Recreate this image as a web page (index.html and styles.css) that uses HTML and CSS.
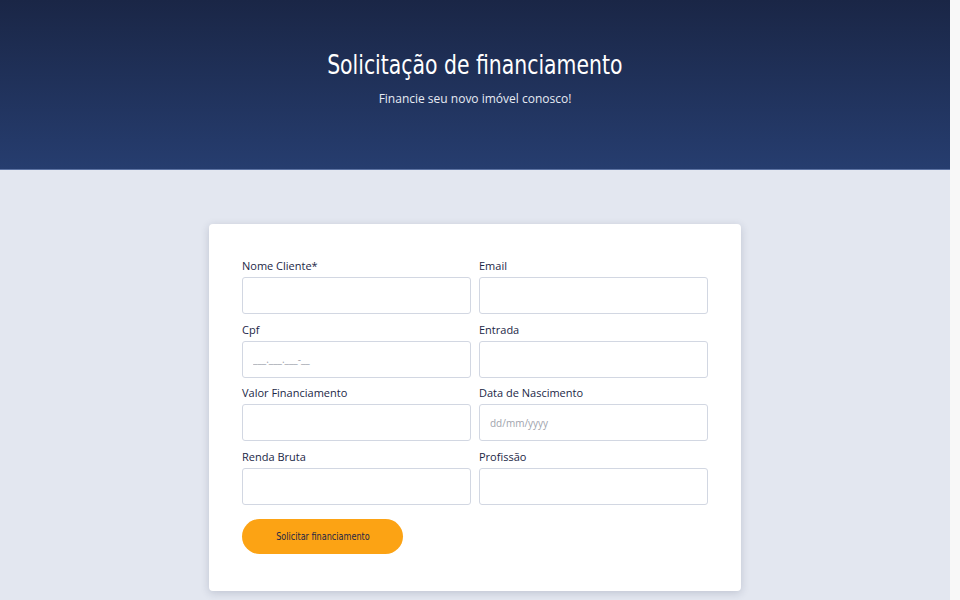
FILE: index.html
```html
<!DOCTYPE html>
<html lang="pt-BR">
<head>
	<title>Solicitação de financiamento</title>
	<meta charset="UTF-8">
	<link rel="stylesheet" href="styles.css">
</head>
<body>
	<header class="hero">
		<h1><span class="narrow">Solicitação de financiamento</span></h1>
		<p>Financie seu novo imóvel conosco!</p>
	</header>

	<section class="main">
		<form class="card">
			<div class="fields">
				<div class="field">
					<label>Nome Cliente*</label>
					<input type="text">
				</div>
				<div class="field">
					<label>Email</label>
					<input type="text">
				</div>
				<div class="field">
					<label>Cpf</label>
					<input type="text" placeholder="___.___.___-__">
				</div>
				<div class="field">
					<label>Entrada</label>
					<input type="text">
				</div>
				<div class="field">
					<label>Valor Financiamento</label>
					<input type="text">
				</div>
				<div class="field">
					<label>Data de Nascimento</label>
					<input type="text" placeholder="dd/mm/yyyy">
				</div>
				<div class="field">
					<label>Renda Bruta</label>
					<input type="text">
				</div>
				<div class="field">
					<label>Profissão</label>
					<input type="text">
				</div>
			</div>
			<button type="button" class="submit"><span class="narrow">Solicitar financiamento</span></button>
		</form>
	</section>
</body>
</html>
```

FILE: styles.css
```css
html {
	background: #f8f8f8;
}

body {
	margin: 0 10px 0 0;
	padding: 0;
	background: #e3e7f0;
	font-family: "Open Sans", "Noto Sans", sans-serif;
	color: #1b2746;
}

/* condensed display text */
.narrow {
	display: inline-block;
	font-family: "DejaVu Sans Condensed", sans-serif;
	transform: scaleX(0.84);
}

/* header */
.hero {
	height: 169px;
	background: linear-gradient(to bottom, #1a2646, #263d6f);
	border-bottom: 1px solid #5d73a3;
	text-align: center;
	color: #fff;
	overflow: hidden;
}
.hero h1 {
	margin: 47px 0 0;
	font-weight: normal;
	font-size: 27px;
	line-height: 34px;
}
.hero p {
	margin: 8px 0 0;
	font-size: 12px;
	line-height: 18px;
	color: #e6ebf4;
}

/* form card */
.main {
	padding: 54px 0 485px;
}
.card {
	width: 532px;
	box-sizing: border-box;
	margin: 0 auto;
	padding: 33px 33px 37px;
	background: #fff;
	border-radius: 4px;
	box-shadow: 0 2px 8px rgba(30, 40, 70, 0.18);
}
.fields {
	display: grid;
	grid-template-columns: 1fr 1fr;
	column-gap: 8px;
	row-gap: 6.5px;
}
.field label {
	display: block;
	font-size: 11px;
	line-height: 17px;
	margin-bottom: 3px;
}
.field input {
	display: block;
	width: 100%;
	height: 37px;
	box-sizing: border-box;
	padding: 0 10px;
	border: 1px solid #d2d7e2;
	border-radius: 3px;
	font-family: inherit;
	font-size: 10px;
	color: #1b2746;
	outline: none;
}
.field input::placeholder {
	color: #a0a4ad;
}

.submit {
	display: block;
	margin-top: 14px;
	width: 161px;
	height: 35px;
	padding: 0;
	border: 0;
	border-radius: 18px;
	background: #fca314;
	color: #1b2746;
	font-size: 10px;
	cursor: pointer;
}
.submit .narrow {
	transform: scaleX(0.9);
}
```
